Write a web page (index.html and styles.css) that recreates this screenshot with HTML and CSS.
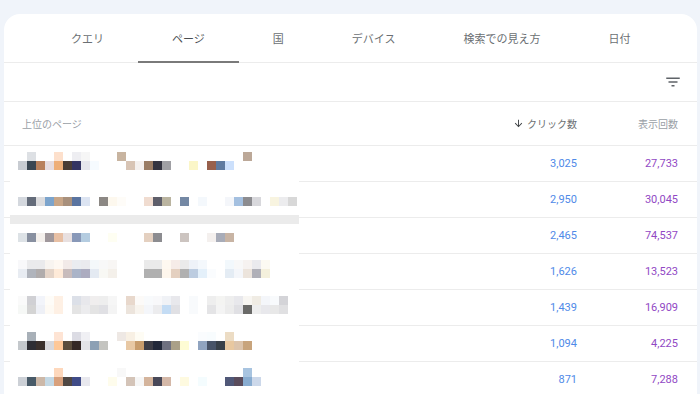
FILE: index.html
```html
<!DOCTYPE html>
<html lang="ja">
<head>
<meta charset="utf-8">
<link rel="stylesheet" href="styles.css">
</head>
<body>
<div class="card">
  <nav class="tabs">
    <div class="tab">クエリ</div>
    <div class="tab active">ページ</div>
    <div class="tab">国</div>
    <div class="tab">デバイス</div>
    <div class="tab">検索での見え方</div>
    <div class="tab">日付</div>
  </nav>
  <div class="toolbar">
    <svg class="filter" viewBox="0 0 24 24" width="18" height="18"><path d="M10 18h4v-2h-4v2zM3 6v2h18V6H3zm3 7h12v-2H6v2z"/></svg>
  </div>
  <div class="row head">
    <div class="c-page">上位のページ</div>
    <div class="c-num sort"><svg class="arrow" viewBox="0 0 24 24" width="11" height="11"><path d="M20 12l-1.41-1.41L13 16.17V4h-2v12.17l-5.58-5.59L4 12l8 8 8-8z"/></svg>クリック数</div>
    <div class="c-num">表示回数</div>
  </div>
  <div class="body">
    <div class="row"><div class="c-page"></div><div class="c-num clicks">3,025</div><div class="c-num imp">27,733</div></div>
    <div class="row"><div class="c-page"></div><div class="c-num clicks">2,950</div><div class="c-num imp">30,045</div></div>
    <div class="row"><div class="c-page"></div><div class="c-num clicks">2,465</div><div class="c-num imp">74,537</div></div>
    <div class="row"><div class="c-page"></div><div class="c-num clicks">1,626</div><div class="c-num imp">13,523</div></div>
    <div class="row"><div class="c-page"></div><div class="c-num clicks">1,439</div><div class="c-num imp">16,909</div></div>
    <div class="row"><div class="c-page"></div><div class="c-num clicks">1,094</div><div class="c-num imp">4,225</div></div>
    <div class="row"><div class="c-page"></div><div class="c-num clicks">871</div><div class="c-num imp">7,288</div></div>
    <svg class="mosaic" viewBox="0 0 289 248" width="289" height="248">
      <rect class="bg" x="0" y="0" width="289" height="248"/>
      <rect class="band" x="0" y="69" width="289" height="9"/>
      <g>
        <rect x="17" y="6" fill="#dde0e4"/><rect x="44" y="6" fill="#fde0cc"/><rect x="62" y="6" fill="#eeeef2"/><rect x="71" y="6" fill="#f6f6f6"/><rect x="107" y="6" fill="#c8b4a0"/><rect x="233" y="6" fill="#bca898"/>
        <rect x="8" y="15" fill="#c8ccd2"/><rect x="17" y="15" fill="#3a4652"/><rect x="26" y="15" fill="#b8805c"/><rect x="35" y="15" fill="#e6dce0"/><rect x="44" y="15" fill="#eeae78"/><rect x="53" y="15" fill="#4a3c34"/><rect x="62" y="15" fill="#343462"/><rect x="71" y="15" fill="#e6e6ec"/><rect x="80" y="15" fill="#f6fbff"/><rect x="116" y="15" fill="#d8c4b4"/><rect x="125" y="15" fill="#f4f0ee"/><rect x="134" y="15" fill="#9a7c64"/><rect x="143" y="15" fill="#343440"/><rect x="152" y="15" fill="#a0a0a4"/><rect x="179" y="15" fill="#fbf6c8"/><rect x="197" y="15" fill="#98604c"/><rect x="206" y="15" fill="#5e7aa0"/><rect x="215" y="15" fill="#cce0fc"/>

        <rect x="8" y="51" fill="#d4d8de"/><rect x="17" y="51" fill="#646c7a"/><rect x="26" y="51" fill="#dcdcde"/><rect x="35" y="51" fill="#7ca4cc"/><rect x="44" y="51" fill="#c8a688"/><rect x="53" y="51" fill="#a8907c"/><rect x="62" y="51" fill="#5a74a0"/><rect x="71" y="51" fill="#dce4f2"/><rect x="89" y="51" fill="#8c8884"/><rect x="98" y="51" fill="#fdf8ee"/><rect x="107" y="51" fill="#fefcf8"/><rect x="134" y="51" fill="#f0dcd0"/><rect x="143" y="51" fill="#5e5e6a"/><rect x="152" y="51" fill="#bab4a0"/><rect x="170" y="51" fill="#7488a4"/><rect x="188" y="51" fill="#f4f8fc"/><rect x="215" y="51" fill="#f4f6fa"/><rect x="224" y="51" fill="#a4c0e0"/><rect x="233" y="51" fill="#8c8c90"/><rect x="242" y="51" fill="#d8d8dc"/><rect x="260" y="51" fill="#f8f4e0"/><rect x="269" y="51" fill="#ececee"/><rect x="278" y="51" fill="#d8d8d8"/>

        <rect x="8" y="87" fill="#dde2e6"/><rect x="17" y="87" fill="#8890a0"/><rect x="26" y="87" fill="#f4f0ec"/><rect x="35" y="87" fill="#a0989c"/><rect x="44" y="87" fill="#e8c0a4"/><rect x="53" y="87" fill="#e8e0e0"/><rect x="62" y="87" fill="#8898b8"/><rect x="71" y="87" fill="#b4cce0"/><rect x="98" y="87" fill="#fefef2"/><rect x="134" y="87" fill="#e4d0c0"/><rect x="143" y="87" fill="#8c8c90"/><rect x="170" y="87" fill="#ccc4c0"/><rect x="197" y="87" fill="#f4f0ee"/><rect x="206" y="87" fill="#a8acb8"/><rect x="215" y="87" fill="#c8b4a4"/>

        <rect x="8" y="114" fill="#f8f8fa"/><rect x="17" y="114" fill="#eaeaec"/><rect x="26" y="114" fill="#eaeaec"/><rect x="35" y="114" fill="#f8f4f0"/><rect x="44" y="114" fill="#fef8f2"/><rect x="53" y="114" fill="#f2eae8"/><rect x="62" y="114" fill="#eaecf0"/><rect x="71" y="114" fill="#eaeaee"/><rect x="80" y="114" fill="#f4f8fa"/><rect x="89" y="114" fill="#f8f8f8"/><rect x="98" y="114" fill="#f8f6f4"/><rect x="134" y="114" fill="#eaeaea"/><rect x="143" y="114" fill="#eaeaea"/><rect x="152" y="114" fill="#fef8f0"/><rect x="161" y="114" fill="#f6ece8"/><rect x="170" y="114" fill="#eaeaea"/><rect x="179" y="114" fill="#eef2f8"/><rect x="188" y="114" fill="#f4f8fc"/><rect x="215" y="114" fill="#f2f8fc"/><rect x="224" y="114" fill="#f8f8f8"/><rect x="233" y="114" fill="#f6f2f0"/><rect x="242" y="114" fill="#eaeaee"/><rect x="251" y="114" fill="#fcfaf2"/>
        <rect x="8" y="123" fill="#e8ecf2"/><rect x="17" y="123" fill="#b0b4bc"/><rect x="26" y="123" fill="#b0acac"/><rect x="35" y="123" fill="#e4d4c8"/><rect x="44" y="123" fill="#feead8"/><rect x="53" y="123" fill="#c8bcbc"/><rect x="62" y="123" fill="#aab4c8"/><rect x="71" y="123" fill="#acacc0"/><rect x="80" y="123" fill="#e4eaf2"/><rect x="89" y="123" fill="#f8f8f4"/><rect x="98" y="123" fill="#f4f0ea"/><rect x="134" y="123" fill="#b0b0b0"/><rect x="143" y="123" fill="#b0b0b0"/><rect x="152" y="123" fill="#fef6ec"/><rect x="161" y="123" fill="#e4d0c0"/><rect x="170" y="123" fill="#b0b0b0"/><rect x="179" y="123" fill="#bccce0"/><rect x="188" y="123" fill="#e4f0fa"/><rect x="197" y="123" fill="#fafcfe"/><rect x="215" y="123" fill="#e4ecf4"/><rect x="224" y="123" fill="#f4f6fa"/><rect x="233" y="123" fill="#ece4dc"/><rect x="242" y="123" fill="#b0b0b8"/><rect x="251" y="123" fill="#f4f0dc"/>

        <rect x="8" y="150" fill="#fafafa"/><rect x="17" y="150" fill="#d0d0d4"/><rect x="26" y="150" fill="#f2f4fa"/><rect x="35" y="150" fill="#fefcf8"/><rect x="44" y="150" fill="#fef0e4"/><rect x="62" y="150" fill="#dce0e8"/><rect x="71" y="150" fill="#e8e8ec"/><rect x="80" y="150" fill="#f0eeee"/><rect x="89" y="150" fill="#eeeeee"/><rect x="98" y="150" fill="#f6f6f6"/><rect x="116" y="150" fill="#e8d8cc"/><rect x="125" y="150" fill="#fcfaf8"/><rect x="134" y="150" fill="#f8fafc"/><rect x="143" y="150" fill="#f8f8fa"/><rect x="152" y="150" fill="#f0f2f6"/><rect x="161" y="150" fill="#e8e8ec"/><rect x="179" y="150" fill="#f8fafc"/><rect x="197" y="150" fill="#eeeeee"/><rect x="206" y="150" fill="#f4f4f2"/><rect x="215" y="150" fill="#eeeeee"/><rect x="224" y="150" fill="#e8e8ec"/><rect x="233" y="150" fill="#f8f6f2"/><rect x="242" y="150" fill="#f0ece4"/><rect x="251" y="150" fill="#f4f6fa"/><rect x="260" y="150" fill="#f8fafc"/><rect x="269" y="150" fill="#d4d4d8"/>
        <rect x="8" y="159" fill="#f6f8f6"/><rect x="17" y="159" fill="#d4d4d4"/><rect x="26" y="159" fill="#eef0f6"/><rect x="35" y="159" fill="#fefaf4"/><rect x="44" y="159" fill="#fef0e4"/><rect x="62" y="159" fill="#e4e4e4"/><rect x="71" y="159" fill="#ececee"/><rect x="80" y="159" fill="#e4e4e4"/><rect x="89" y="159" fill="#e0e0e4"/><rect x="98" y="159" fill="#f4f4f4"/><rect x="116" y="159" fill="#ece4dc"/><rect x="125" y="159" fill="#f8f4ee"/><rect x="134" y="159" fill="#f4f6fa"/><rect x="143" y="159" fill="#ececee"/><rect x="152" y="159" fill="#c4dcf4"/><rect x="161" y="159" fill="#e0e0e4"/><rect x="179" y="159" fill="#f8fafc"/><rect x="197" y="159" fill="#e4e4e6"/><rect x="206" y="159" fill="#f4f4f4"/><rect x="215" y="159" fill="#ececec"/><rect x="224" y="159" fill="#e0e0e4"/><rect x="233" y="159" fill="#6a6a68"/><rect x="242" y="159" fill="#eeeeee"/><rect x="251" y="159" fill="#e8e8ec"/><rect x="260" y="159" fill="#e8e8e8"/><rect x="269" y="159" fill="#e0e0e2"/>

        <rect x="17" y="186" fill="#a8b0b8"/><rect x="44" y="186" fill="#fee4d4"/><rect x="62" y="186" fill="#dcdce4"/><rect x="71" y="186" fill="#f0f0f4"/><rect x="107" y="186" fill="#eee8e4"/><rect x="116" y="186" fill="#f8f0e4"/><rect x="125" y="186" fill="#fefcf4"/><rect x="188" y="186" fill="#fafcfe"/><rect x="197" y="186" fill="#f8fcfe"/><rect x="215" y="186" fill="#ecdcc4"/>
        <rect x="8" y="195" fill="#c4c8cc"/><rect x="17" y="195" fill="#2e2e34"/><rect x="26" y="195" fill="#3a302c"/><rect x="35" y="195" fill="#d8d8dc"/><rect x="44" y="195" fill="#fec898"/><rect x="53" y="195" fill="#5a4c3c"/><rect x="62" y="195" fill="#342826"/><rect x="71" y="195" fill="#e4e4e8"/><rect x="80" y="195" fill="#8ca0b4"/><rect x="89" y="195" fill="#c4c4c0"/><rect x="116" y="195" fill="#e8c8a4"/><rect x="125" y="195" fill="#c89c6c"/><rect x="134" y="195" fill="#3c3c46"/><rect x="143" y="195" fill="#22283a"/><rect x="152" y="195" fill="#6e7080"/><rect x="161" y="195" fill="#aaa088"/><rect x="170" y="195" fill="#fefcd4"/><rect x="188" y="195" fill="#90a4c0"/><rect x="197" y="195" fill="#485468"/><rect x="206" y="195" fill="#384048"/><rect x="215" y="195" fill="#e8c8a0"/><rect x="224" y="195" fill="#dcc4ac"/><rect x="233" y="195" fill="#c8a47c"/>

        <rect x="44" y="222" fill="#fed8bc"/><rect x="107" y="222" fill="#f8f8f8"/><rect x="233" y="222" fill="#a8c4e0"/>
        <rect x="8" y="231" fill="#ccd0d6"/><rect x="17" y="231" fill="#485a68"/><rect x="26" y="231" fill="#ccb8a8"/><rect x="35" y="231" fill="#c4d8e4"/><rect x="44" y="231" fill="#d8a07c"/><rect x="53" y="231" fill="#504844"/><rect x="62" y="231" fill="#404c88"/><rect x="71" y="231" fill="#e8e8ee"/><rect x="98" y="231" fill="#fefcec"/><rect x="116" y="231" fill="#d4c4b8"/><rect x="125" y="231" fill="#f6f6f6"/><rect x="134" y="231" fill="#d4b49c"/><rect x="143" y="231" fill="#484858"/><rect x="152" y="231" fill="#d4b8a8"/><rect x="170" y="231" fill="#fefae0"/><rect x="188" y="231" fill="#f4fcfe"/><rect x="215" y="231" fill="#505878"/><rect x="224" y="231" fill="#5a4c5c"/><rect x="233" y="231" fill="#88acd0"/><rect x="242" y="231" fill="#ccd8ea"/>
      </g>
    </svg>
  </div>
</div>
</body>
</html>
```

FILE: styles.css
```css
html, body {
  margin: 0;
  padding: 0;
  height: 100%;
  overflow: hidden;
}
body {
  background: #f0f4fa;
  font-family: "Noto Sans CJK JP", "Noto Sans", Roboto, sans-serif;
  color: #5f6368;
}
.card {
  margin: 14px 3px 0 4px;
  background: #fff;
  border-radius: 16px 16px 0 0;
  min-height: 400px;
}
.tabs {
  display: flex;
  height: 48px;
  padding-left: 33px;
  border-bottom: 1px solid #ececec;
}
.tab {
  display: flex;
  align-items: center;
  justify-content: center;
  padding: 0 34px;
  font-size: 11px;
  line-height: 1;
  color: #6b6f73;
  border-bottom: 2px solid transparent;
  padding-top: 2px;
}
.tab.active {
  color: #4a4e52;
  border-bottom-color: #7a7a7a;
  margin-bottom: -1px;
}
.toolbar {
  height: 38px;
  display: flex;
  align-items: center;
  justify-content: flex-end;
  padding-right: 15px;
  border-bottom: 1px solid #ececec;
}
.filter {
  fill: #5f6368;
}
.row {
  display: grid;
  grid-template-columns: 1fr 100px 101px;
  padding: 0 19px 0 18px;
  height: 35px;
  align-items: center;
  border-bottom: 1px solid #ececec;
}
.row.head {
  height: 43px;
}
.c-page {
  font-size: 10px;
  color: #9aa0a6;
}
.c-num {
  text-align: right;
  font-family: Roboto, "Noto Sans CJK JP", sans-serif;
  font-size: 11px;
}
.head .c-num {
  font-family: "Noto Sans CJK JP", sans-serif;
  font-size: 10px;
  color: #9aa0a6;
}
.head .sort {
  color: #6b6f73;
  display: flex;
  justify-content: flex-end;
  align-items: center;
  gap: 3px;
}
.arrow {
  fill: #3c4043;
}
.clicks {
  color: #4f8ae8;
}
.imp {
  color: #9148c4;
}
.body {
  position: relative;
}
.mosaic {
  position: absolute;
  left: 6px;
  top: 0;
}
.mosaic .bg {
  fill: #fff;
}
.mosaic .band {
  fill: #ebebeb;
}
.mosaic g rect {
  width: 9px;
  height: 9px;
}
```
